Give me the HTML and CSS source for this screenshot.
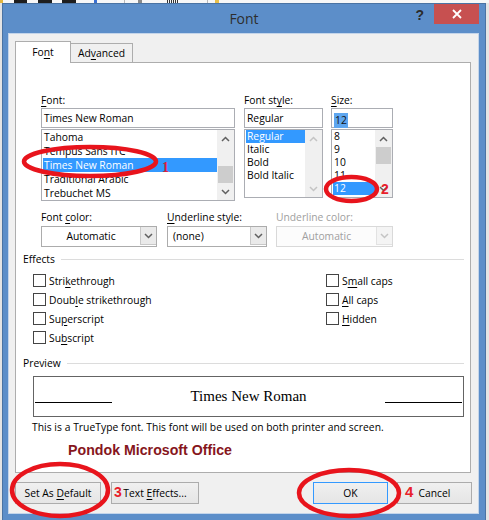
FILE: index.html
```html
<!DOCTYPE html>
<html lang="en">
<head>
<meta charset="utf-8">
<title>Font</title>
<link rel="stylesheet" href="styles.css">
</head>
<body>
<div class="topstrip">
  <span class="ts ts-yellow"></span>
  <span class="ts ts-black ts-b1"></span>
  <span class="ts ts-black ts-b2"></span>
  <span class="ts ts-black ts-b3"></span>
  <span class="ts ts-blue"></span>
  <span class="ts ts-line ts-l1"></span>
  <span class="ts ts-mark"></span>
  <span class="ts ts-dots"></span>
  <span class="ts ts-line ts-l2"></span>
  <span class="ts ts-yellow2"></span>
</div>
<div class="window">
  <div class="titlebar">
    <div class="tb-left"></div>
    <div class="title">Font</div>
    <div class="caption-btns">
      <span class="help">?</span>
      <span class="close"><svg class="close-x" width="10" height="10" viewBox="0 0 10 10"><path d="M1 1L9 9M9 1L1 9"/></svg></span>
    </div>
  </div>
  <div class="client">
    <div class="tabs">
      <div class="tab tab-active">Fo<u>n</u>t</div>
      <div class="tab tab-adv">Ad<u>v</u>anced</div>
    </div>
    <div class="panel">
      <div class="fontrow">
        <div class="col col-font">
          <div class="lbl"><u>F</u>ont:</div>
          <div class="textbox">Times New Roman</div>
          <div class="listbox lb-font">
            <div class="items rows14">
              <div class="item">Tahoma</div>
              <div class="item">Tempus Sans ITC</div>
              <div class="item sel">Times New Roman</div>
              <div class="item">Traditional Arabic</div>
              <div class="item">Trebuchet MS</div>
            </div>
            <div class="vscroll">
              <span class="sbtn"><svg class="chev" width="9" height="6" viewBox="0 0 9 6"><polyline points="1,5 4.5,1.5 8,5"/></svg></span>
              <span class="track track-end"><span class="thumb"></span></span>
              <span class="sbtn"><svg class="chev" width="9" height="6" viewBox="0 0 9 6"><polyline points="1,1 4.5,4.5 8,1"/></svg></span>
            </div>
          </div>
        </div>
        <div class="col col-style">
          <div class="lbl">Font st<u>y</u>le:</div>
          <div class="textbox">Regular</div>
          <div class="listbox lb-style">
            <div class="items rows13">
              <div class="item sel">Regular</div>
              <div class="item">Italic</div>
              <div class="item">Bold</div>
              <div class="item">Bold Italic</div>
            </div>
            <div class="vscroll">
              <span class="sbtn"><svg class="chev chev-dis" width="9" height="6" viewBox="0 0 9 6"><polyline points="1,5 4.5,1.5 8,5"/></svg></span>
              <span class="track"></span>
              <span class="sbtn"><svg class="chev chev-dis" width="9" height="6" viewBox="0 0 9 6"><polyline points="1,1 4.5,4.5 8,1"/></svg></span>
            </div>
          </div>
        </div>
        <div class="col col-size">
          <div class="lbl"><u>S</u>ize:</div>
          <div class="textbox"><span class="txtsel">12</span></div>
          <div class="listbox lb-size">
            <div class="items rows13">
              <div class="item">8</div>
              <div class="item">9</div>
              <div class="item">10</div>
              <div class="item">11</div>
              <div class="item sel">12</div>
            </div>
            <div class="vscroll">
              <span class="sbtn"><svg class="chev" width="9" height="6" viewBox="0 0 9 6"><polyline points="1,5 4.5,1.5 8,5"/></svg></span>
              <span class="track"><span class="thumb"></span></span>
              <span class="sbtn"><svg class="chev" width="9" height="6" viewBox="0 0 9 6"><polyline points="1,1 4.5,4.5 8,1"/></svg></span>
            </div>
          </div>
        </div>
      </div>

      <div class="colorrow">
        <div class="ccol ccol-fc">
          <div class="lbl">Font <u>c</u>olor:</div>
          <div class="combo"><span class="combo-text center">Automatic</span><span class="combo-btn"><svg class="chev" width="9" height="6" viewBox="0 0 9 6"><polyline points="1,1 4.5,4.5 8,1"/></svg></span></div>
        </div>
        <div class="ccol ccol-us">
          <div class="lbl"><u>U</u>nderline style:</div>
          <div class="combo"><span class="combo-text">(none)</span><span class="combo-btn"><svg class="chev" width="9" height="6" viewBox="0 0 9 6"><polyline points="1,1 4.5,4.5 8,1"/></svg></span></div>
        </div>
        <div class="ccol ccol-uc">
          <div class="lbl lbl-dis">Underline color:</div>
          <div class="combo combo-dis"><span class="combo-text center">Automatic</span><span class="combo-btn"><svg class="chev chev-dis" width="9" height="6" viewBox="0 0 9 6"><polyline points="1,1 4.5,4.5 8,1"/></svg></span></div>
        </div>
      </div>

      <div class="section-head"><span>Effects</span><span class="rule"></span></div>
      <div class="effects">
        <div class="effcol effcol-left">
          <div class="chk"><span class="box"></span><span>Stri<u>k</u>ethrough</span></div>
          <div class="chk"><span class="box"></span><span>Doub<u>l</u>e strikethrough</span></div>
          <div class="chk"><span class="box"></span><span>Su<u>p</u>erscript</span></div>
          <div class="chk"><span class="box"></span><span>Su<u>b</u>script</span></div>
        </div>
        <div class="effcol">
          <div class="chk"><span class="box"></span><span>S<u>m</u>all caps</span></div>
          <div class="chk"><span class="box"></span><span><u>A</u>ll caps</span></div>
          <div class="chk"><span class="box"></span><span><u>H</u>idden</span></div>
        </div>
      </div>

      <div class="section-head sh-preview"><span>Preview</span><span class="rule"></span></div>
      <div class="preview">
        <span class="pline"></span>
        <span class="ptext">Times New Roman</span>
        <span class="pline"></span>
      </div>
      <div class="pcaption">This is a TrueType font. This font will be used on both printer and screen.</div>
      <div class="brand">Pondok Microsoft Office</div>
    </div>

    <div class="buttons">
      <div class="btn-group">
        <div class="btn btn-setdef">Set As <u>D</u>efault</div>
        <div class="btn btn-effects">Text <u>E</u>ffects...</div>
      </div>
      <div class="btn-group btn-group-r">
        <div class="btn btn-ok">OK</div>
        <div class="btn btn-cancel">Cancel</div>
      </div>
    </div>
  </div>
</div>

<svg class="annot" width="489" height="520" viewBox="0 0 489 520">
  <g class="rings">
    <ellipse cx="90" cy="161.5" rx="66" ry="14.5"/>
    <ellipse cx="351.5" cy="189" rx="25.5" ry="12"/>
    <ellipse cx="60" cy="490" rx="48" ry="26"/>
    <ellipse cx="349" cy="493" rx="50" ry="23"/>
  </g>
  <text class="anum anum-serif" x="162" y="172">1</text>
  <text class="anum" x="381" y="194">2</text>
  <text class="anum" x="114" y="497">3</text>
  <text class="anum anum-4" x="405" y="497">4</text>
</svg>
</body>
</html>
```
FILE: styles.css
```css
* { box-sizing: border-box; }
html, body { margin: 0; padding: 0; }
body {
  width: 489px;
  height: 520px;
  overflow: hidden;
  position: relative;
  background: #e4e4e4;
  font-family: "Open Sans", "Noto Sans", sans-serif;
  font-size: 10.3px;
  color: #000;
}
u {
  text-decoration: underline;
  text-decoration-thickness: 1px;
  text-underline-offset: 1.5px;
}

/* strip of the application behind the dialog */
.topstrip { height: 3px; display: flex; background: #f7f7f7; }
.ts { display: block; height: 3px; flex: none; }
.ts-yellow { width: 3px; background: #e2b640; }
.ts-black { background: #1e1e1e; }
.ts-b1 { width: 13px; margin-left: 11px; }
.ts-b2 { width: 14px; margin-left: 11px; }
.ts-b3 { width: 14px; margin-left: 10px; }
.ts-blue { width: 3px; margin-left: 18px; background: #3a6fd0; }
.ts-line { width: 1px; background: #b8b8b8; }
.ts-l1 { margin-left: 27px; }
.ts-mark { width: 4px; margin-left: 13px; background: #8a8a8a; }
.ts-dots { width: 12px; margin-left: 25px; background: repeating-linear-gradient(90deg, #333 0 1px, transparent 1px 2px); }
.ts-l2 { margin-left: 28px; }
.ts-yellow2 { width: 4px; margin-left: 7px; background: #e8bf4a; }

/* window frame */
.window {
  margin-left: 2px;
  width: 484px;
  height: 517px;
  background: #5c8ec9;
  border: 1px solid #4a73a3;
  border-bottom: none;
  display: flex;
  flex-direction: column;
}
.titlebar {
  height: 29px;
  flex: none;
  display: grid;
  grid-template-columns: 1fr auto 1fr;
}
.title {
  font-family: "Open Sans", sans-serif;
  font-size: 14px;
  line-height: 29px;
  color: #2e2e2e;
}
.caption-btns {
  display: flex;
  justify-content: flex-end;
  align-items: flex-start;
  padding-right: 6px;
}
.help {
  font: bold 14px/20px "Liberation Sans", Arial, sans-serif;
  color: #2b2b2b;
  margin-right: 10px;
  margin-top: 1px;
}
.close {
  width: 45px;
  height: 20px;
  background: #c75050;
  display: flex;
  align-items: center;
  justify-content: center;
}
.close-x { display: block; }
.close-x path { stroke: #fff; stroke-width: 1.8; fill: none; }

/* client */
.client {
  margin: 0 6px 0 5px;
  height: 481px;
  flex: none;
  background: #f0f0f0;
  border: 1px solid #c4d5ea;
  padding: 0 6px;
}

.tabs {
  display: flex;
  align-items: flex-end;
  height: 21px;
  margin-top: 7px;
}
.tab {
  height: 19px;
  border: 1px solid #adadad;
  border-bottom: none;
  background: #f0f0f0;
  line-height: 19px;
  text-align: center;
  white-space: nowrap;
}
.tab-active {
  width: 56px;
  height: 22px;
  line-height: 21px;
  background: #fff;
  margin-bottom: -1px;
  position: relative;
  z-index: 1;
}
.tab-adv { width: 63px; margin-left: -1px; }

.panel {
  width: 456px;
  height: 411px;
  background: #fff;
  border: 1px solid #adadad;
  padding: 0 6px 0 7px;
}

/* font / style / size */
.fontrow {
  display: flex;
  margin-left: 18px;
  padding-top: 30px;
}
.col { flex: none; }
.col-font { width: 194px; }
.col-style { width: 79px; margin-left: 9px; }
.col-size { width: 62px; margin-left: 8px; }

.lbl {
  height: 15px;
  line-height: 15px;
  white-space: nowrap;
}
.lbl-dis { color: #a0a0a0; }
.textbox {
  height: 20px;
  border: 1px solid #abadb3;
  line-height: 18px;
  padding-left: 2px;
  background: #fff;
  white-space: nowrap;
}
.txtsel {
  display: inline-block;
  background: #5ea6ef;
  color: #111;
  line-height: 15px;
  padding: 0 1px;
  vertical-align: -2px;
}
.listbox {
  margin-top: 1px;
  border: 1px solid #abadb3;
  display: flex;
  background: #fff;
}
.lb-font { height: 72px; }
.lb-style, .lb-size { height: 69px; }
.items {
  flex: 1;
  min-width: 0;
  padding-left: 1px;
  overflow: hidden;
}
.item {
  padding-left: 1px;
  white-space: nowrap;
}
.rows14 .item { height: 14px; line-height: 14px; }
.rows13 .item { height: 13px; line-height: 13px; }
.item.sel { background: #3399ff; color: #fff; }

.vscroll {
  width: 17px;
  flex: none;
  display: flex;
  flex-direction: column;
  background: #f0f0f0;
}
.sbtn {
  height: 17px;
  flex: none;
  display: flex;
  align-items: center;
  justify-content: center;
}
.track {
  flex: 1;
  display: flex;
  flex-direction: column;
  justify-content: flex-start;
}
.track-end { justify-content: flex-end; }
.thumb {
  height: 17px;
  margin: 0 1px;
  background: #cdcdcd;
}
.chev { display: block; }
.chev polyline { fill: none; stroke: #606060; stroke-width: 1.5; }
.chev-dis polyline { stroke: #c4c4c4; }

/* colour row */
.colorrow {
  display: flex;
  margin-left: 18px;
  margin-top: 9px;
}
.ccol { flex: none; }
.ccol-fc { width: 116px; }
.ccol-us { width: 100px; margin-left: 10px; }
.ccol-uc { width: 117px; margin-left: 9px; }
.combo {
  margin-top: 1px;
  height: 21px;
  border: 1px solid #acacac;
  background: #fff;
  display: flex;
}
.combo-text {
  flex: 1;
  line-height: 19px;
  padding-left: 5px;
  white-space: nowrap;
}
.combo-text.center { text-align: center; padding-left: 0; }
.combo-btn {
  width: 16px;
  flex: none;
  margin: 0 0 1px 0;
  border-left: 1px solid #c8c8c8;
  border-bottom: 1px solid #c8c8c8;
  background: #eaeaea;
  display: flex;
  align-items: center;
  justify-content: center;
}
.combo-dis { border-color: #d9d9d9; color: #a0a0a0; background: #fcfcfc; }
.combo-dis .combo-btn { background: #f4f4f4; border-color: #e2e2e2; }

/* section headings */
.section-head {
  display: flex;
  align-items: center;
  height: 15px;
  line-height: 15px;
  margin-top: 5px;
}
.sh-preview { margin-top: 9px; }
.rule {
  flex: 1;
  height: 1px;
  background: #dcdcdc;
  margin-left: 6px;
}

/* effects */
.effects {
  display: flex;
  margin-left: 10px;
  margin-top: 4px;
}
.effcol { display: flex; flex-direction: column; }
.effcol-left { width: 293px; }
.chk {
  display: flex;
  align-items: center;
  height: 19px;
  white-space: nowrap;
}
.box {
  width: 13px;
  height: 13px;
  flex: none;
  border: 1px solid #444;
  background: #fff;
  margin-right: 3px;
}

/* preview */
.preview {
  margin: 5px 0 0 10px;
  width: 431px;
  height: 41px;
  border: 1px solid #646464;
  display: flex;
  align-items: center;
  padding: 0 1px;
}
.pline {
  width: 77px;
  height: 1px;
  flex: none;
  background: #000;
  align-self: flex-start;
  margin-top: 25px;
}
.ptext {
  flex: 1;
  text-align: center;
  font: 15px/17px "Liberation Serif", "Times New Roman", serif;
}
.pcaption {
  margin: 3px 0 0 9px;
  line-height: 15px;
  white-space: nowrap;
  letter-spacing: 0.04px;
}
.brand {
  margin: 7px 0 0 45px;
  font: bold 14.2px/16px "Liberation Sans", Arial, sans-serif;
  color: #86161c;
}

/* buttons */
.buttons {
  display: flex;
  justify-content: space-between;
  margin-top: 9px;
}
.btn-group { display: flex; gap: 10px; }
.btn-group-r { gap: 9px; }
.btn {
  height: 22px;
  border: 1px solid #acacac;
  background: linear-gradient(#f0f0f0, #e5e5e5);
  line-height: 20px;
  text-align: center;
  white-space: nowrap;
}
.btn-setdef { width: 86px; }
.btn-effects { width: 88px; }
.btn-ok { width: 75px; border-color: #3399ff; }
.btn-cancel { width: 75px; }

/* red annotations */
.annot {
  position: absolute;
  left: 0;
  top: 0;
  pointer-events: none;
}
.rings ellipse {
  fill: none;
  stroke: #e8141c;
  stroke-width: 4.5;
}
.anum {
  font: bold 14px "Liberation Sans", Arial, sans-serif;
  fill: #e8202a;
}
.anum-serif {
  font: bold 14px "Liberation Serif", serif;
  fill: #d8203a;
}
.anum-4 { font-size: 15px; }
```
